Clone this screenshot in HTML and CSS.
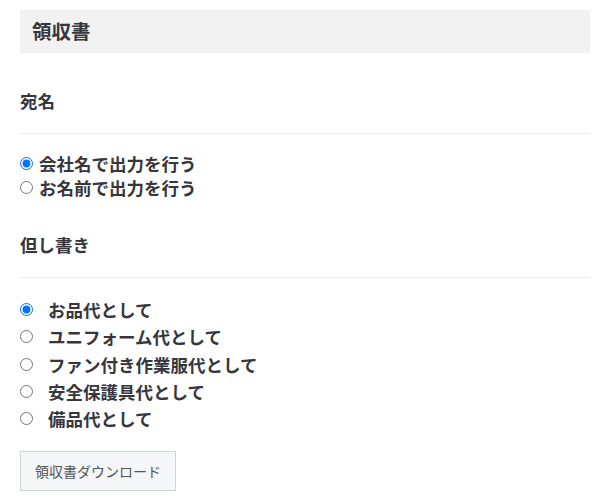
FILE: index.html
```html
<!DOCTYPE html>
<html lang="ja">
<head>
  <meta charset="UTF-8" />
  <meta name="viewport" content="width=device-width, initial-scale=1.0"/>
  <title>領収書</title>
  <link rel="stylesheet" href="styles.css">
</head>
<body>
  <div class="receipt">
    <h1 class="receipt-title">領収書</h1>
    <form id="receiptForm">
      <h2 class="section-title">宛名</h2>
      <div class="choice-list">
        <label class="choice"><input type="radio" name="addressee" value="company" checked> 会社名で出力を行う</label>
        <label class="choice"><input type="radio" name="addressee" value="name"> お名前で出力を行う</label>
      </div>

      <h2 class="section-title section-title-2">但し書き</h2>
      <div class="choice-list choice-list-wide">
        <label class="choice"><input type="radio" name="proviso" value="1" checked> お品代として</label>
        <label class="choice"><input type="radio" name="proviso" value="2"> ユニフォーム代として</label>
        <label class="choice"><input type="radio" name="proviso" value="3"> ファン付き作業服代として</label>
        <label class="choice"><input type="radio" name="proviso" value="4"> 安全保護具代として</label>
        <label class="choice"><input type="radio" name="proviso" value="5"> 備品代として</label>
      </div>

      <button type="button" class="download-btn">領収書ダウンロード</button>
    </form>
  </div>
</body>
</html>
```

FILE: styles.css
```css
body {
  font-family: "Noto Sans CJK JP", "Noto Sans", sans-serif;
  color: #36363c;
  background: #ffffff;
  margin: 0;
  padding: 10px 10px 0 20px;
}
.receipt-title {
  margin: 0;
  height: 43px;
  line-height: 41px;
  padding: 0 12px;
  background-color: #f2f2f2;
  font-size: 19.5px;
  font-weight: bold;
}
.section-title {
  margin: 32px 0 0;
  line-height: 32px;
  padding-bottom: 16px;
  border-bottom: 1px solid #ececec;
  font-size: 17.5px;
  font-weight: bold;
}
.section-title-2 {
  margin-top: 30px;
}
.choice-list {
  margin-top: 17px;
}
.choice {
  display: flex;
  align-items: center;
  gap: 6px;
  height: 24px;
  font-size: 17.5px;
  font-weight: bold;
}
.choice input {
  margin: 0;
  width: 13px;
  height: 13px;
}
.choice-list-wide {
  margin-top: 18px;
}
.choice-list-wide .choice {
  height: 27.3px;
  gap: 15px;
}
.download-btn {
  display: block;
  margin-top: 19px;
  width: 156px;
  height: 40px;
  background-color: #f5f6f7;
  border: 1px solid #d3d3d3;
  color: #555;
  font-family: "Noto Sans CJK JP", sans-serif;
  font-size: 14px;
  padding: 0;
  cursor: pointer;
}
```
